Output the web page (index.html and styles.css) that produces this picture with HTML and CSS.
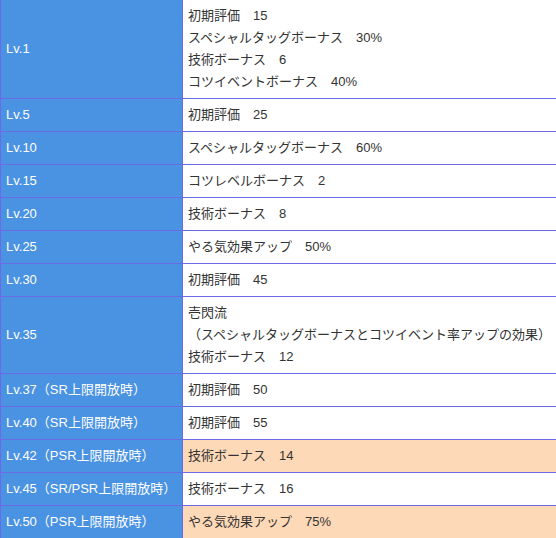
FILE: index.html
```html
<!DOCTYPE html>
<html lang="ja">
<head>
<meta charset="utf-8">
<link rel="stylesheet" href="styles.css">
</head>
<body>
<table class="lv-table">
  <tbody>
    <tr><th>Lv.1</th><td>初期評価　15<br>スペシャルタッグボーナス　30%<br>技術ボーナス　6<br>コツイベントボーナス　40%</td></tr>
    <tr><th>Lv.5</th><td>初期評価　25</td></tr>
    <tr><th>Lv.10</th><td>スペシャルタッグボーナス　60%</td></tr>
    <tr><th>Lv.15</th><td>コツレベルボーナス　2</td></tr>
    <tr><th>Lv.20</th><td>技術ボーナス　8</td></tr>
    <tr><th>Lv.25</th><td>やる気効果アップ　50%</td></tr>
    <tr><th>Lv.30</th><td>初期評価　45</td></tr>
    <tr><th>Lv.35</th><td>壱閃流<br>（スペシャルタッグボーナスとコツイベント率アップの効果）<br>技術ボーナス　12</td></tr>
    <tr><th>Lv.37（SR上限開放時）</th><td>初期評価　50</td></tr>
    <tr><th>Lv.40（SR上限開放時）</th><td>初期評価　55</td></tr>
    <tr class="psr"><th>Lv.42（PSR上限開放時）</th><td>技術ボーナス　14</td></tr>
    <tr><th>Lv.45（SR/PSR上限開放時）</th><td>技術ボーナス　16</td></tr>
    <tr class="psr"><th>Lv.50（PSR上限開放時）</th><td>やる気効果アップ　75%</td></tr>
  </tbody>
</table>
</body>
</html>
```
FILE: styles.css
```css
html, body {
  margin: 0;
  padding: 0;
  background: #ffffff;
}
body {
  font-family: "Liberation Sans", "Noto Sans CJK JP", sans-serif;
  font-size: 13px;
  color: #333333;
  overflow: hidden;
}
.lv-table {
  border-collapse: collapse;
  width: calc(100% + 1px);
  margin-top: -1px;
  table-layout: fixed;
}
.lv-table th,
.lv-table td {
  border: 1px solid #6b6be8;
  padding: 5px 5px;
  line-height: 22px;
  text-align: left;
  vertical-align: middle;
  white-space: nowrap;
}
.lv-table th {
  width: 171px;
  background: #4a92e2;
  color: #ffffff;
  font-weight: normal;
}
.lv-table td {
  background: #ffffff;
}
.lv-table .psr td {
  background: #fed9b7;
}
```
